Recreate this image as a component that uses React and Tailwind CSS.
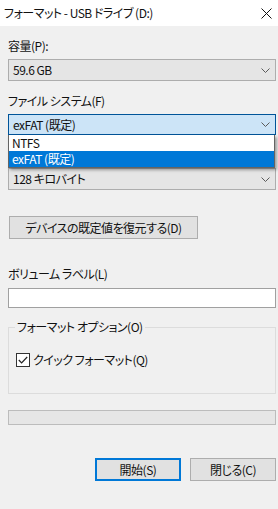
import React from "react";

const font = {
  fontFamily: '"Noto Sans CJK JP", "Noto Sans", sans-serif',
};

function Chevron() {
  return (
    <svg width="9" height="5" viewBox="0 0 9 5" className="shrink-0">
      <path d="M0.5 0.5 L4.5 4.5 L8.5 0.5" fill="none" stroke="#5a5a5a" strokeWidth="1" />
    </svg>
  );
}

function Combo({ text, focused, h = "h-[22px]" }) {
  return (
    <div
      className={
        "flex items-center justify-between pl-[4px] pr-[5px] border " +
        h +
        " " +
        (focused ? "bg-[#cce4f7] border-[#005499]" : "bg-[#e5e5e5] border-[#adadad]")
      }
    >
      <span className="leading-[16px]">{text}</span>
      <Chevron />
    </div>
  );
}

export default function App() {
  return (
    <div
      className="w-[278px] h-[509px] bg-[#f0f0f0] text-[12px] text-[#111] tracking-[-0.5px] [font-feature-settings:'palt'] overflow-hidden"
      style={font}
    >
      {/* title bar */}
      <div className="h-[26px] bg-white flex items-center justify-between pl-[4px] pr-[6px]">
        <span className="leading-[16px]">フォーマット - USB ドライブ (D:)</span>
        <svg width="11" height="11" viewBox="0 0 11 11">
          <path d="M0.5 0.5 L10.5 10.5 M10.5 0.5 L0.5 10.5" stroke="#111" strokeWidth="1" />
        </svg>
      </div>

      <div className="pl-[8px] pr-[2px] flex flex-col">
        <div className="mt-[12px] leading-[16px] h-[16px]">容量(P):</div>
        <div className="mt-[5px]">
          <Combo text="59.6 GB" />
        </div>

        <div className="mt-[12px] leading-[16px] h-[16px]">ファイル システム(F)</div>
        <div className="mt-[5px] relative">
          <Combo text="exFAT (既定)" focused h="h-[21px]" />
          <div className="absolute left-0 right-[1px] top-full z-10 bg-white border-x border-b border-[#646464] shadow-[2px_2px_3px_rgba(0,0,0,0.35)]">
            <div className="h-[16px] leading-[16px] pl-[3px]">NTFS</div>
            <div className="h-[16px] leading-[16px] pl-[3px] bg-[#0078d7] text-white">exFAT (既定)</div>
          </div>
        </div>

        {/* label row hidden behind the open list */}
        <div className="mt-[12px] h-[16px]" />
        <div className="mt-[5px]">
          <Combo text="128 キロバイト" />
        </div>

        <div className="mt-[26px] ml-[1px] w-[189px] h-[23px] bg-[#e1e1e1] border border-[#adadad] flex items-center justify-center">
          <span className="leading-[16px]">デバイスの既定値を復元する(D)</span>
        </div>

        <div className="mt-[27px] leading-[16px] h-[16px]">ボリューム ラベル(L)</div>
        <div className="mt-[6px] h-[20px] bg-white border border-[#a0a0a0]" />

        <fieldset className="mt-[11px] h-[75px] border border-[#dcdcdc] pl-[6px]">
          <legend className="px-[2px] leading-[16px]">フォーマット オプション(O)</legend>
          <div className="mt-[17px] flex items-center gap-[3px] ml-[1px]">
            <div className="w-[14px] h-[14px] bg-white border border-[#333] flex items-center justify-center">
              <svg width="10" height="8" viewBox="0 0 10 8">
                <path d="M0.8 4 L3.6 6.8 L9.2 1" fill="none" stroke="#222" strokeWidth="1.2" />
              </svg>
            </div>
            <span className="leading-[16px]">クイック フォーマット(Q)</span>
          </div>
        </fieldset>

        <div className="mt-[16px] h-[15px] bg-[#e6e6e6] border border-[#bcbcbc]" />

        <div className="mt-[33px] flex justify-end gap-[9px]">
          <div className="w-[86px] h-[23px] bg-[#e1e1e1] border-2 border-[#0078d7] flex items-center justify-center">
            <span className="leading-[16px]">開始(S)</span>
          </div>
          <div className="w-[86px] h-[23px] bg-[#e1e1e1] border border-[#adadad] flex items-center justify-center">
            <span className="leading-[16px]">閉じる(C)</span>
          </div>
        </div>
      </div>
    </div>
  );
}
